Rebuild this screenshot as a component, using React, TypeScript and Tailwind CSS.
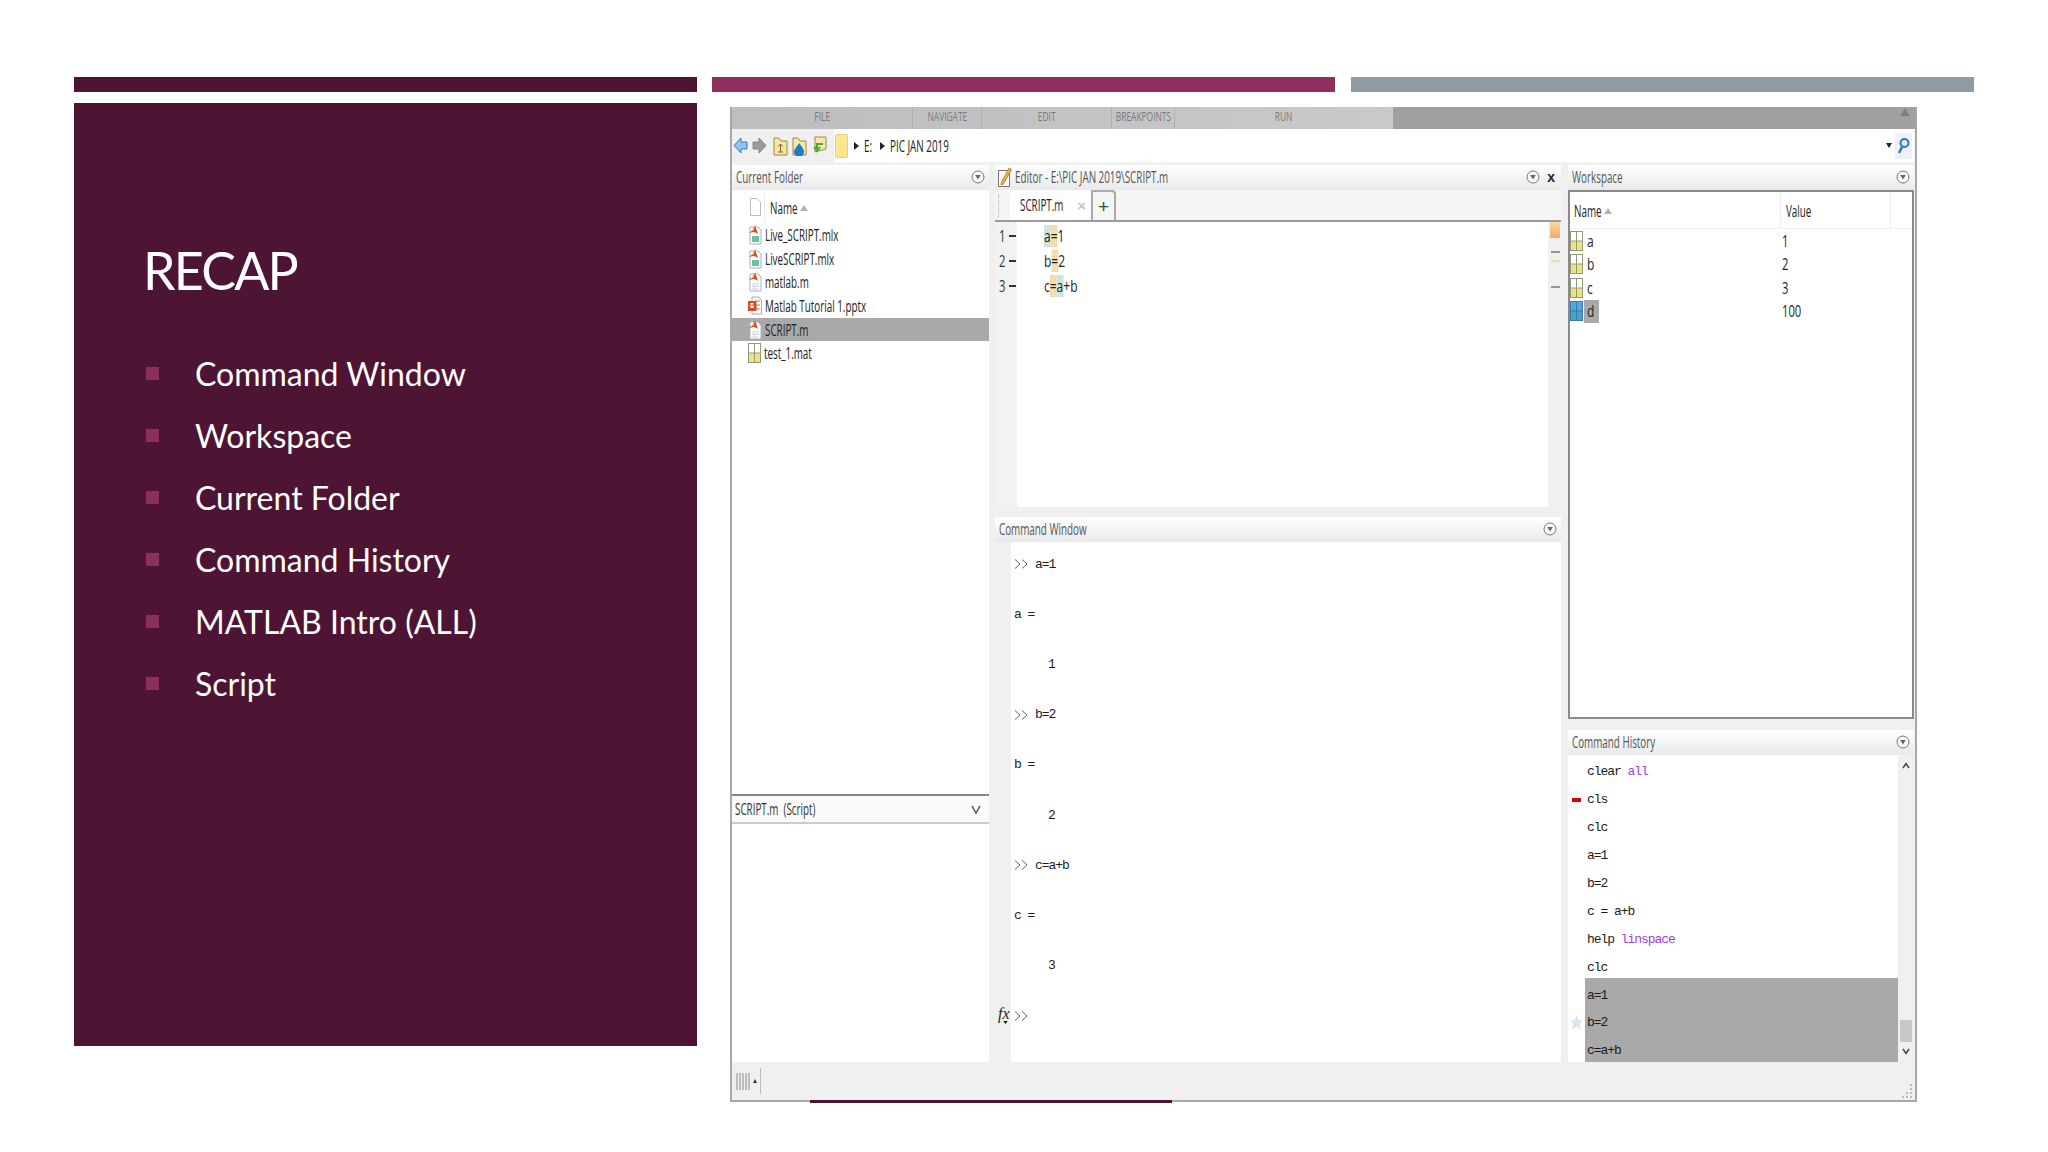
import React from "react";

const uiBase = "inline-block whitespace-nowrap font-['Open_Sans',sans-serif] leading-none";
const ui = `${uiBase} origin-left scale-x-[.615] text-[16px]`;
const code = `${uiBase} origin-left scale-x-[.75] text-[16px]`;
const digit = `${uiBase} origin-left scale-x-[.7] text-[16px]`;
const tabLabel = `${uiBase} origin-center scale-x-[.7] text-[12px] text-[#7a7a7a]`;
const mono = "font-['Liberation_Mono',monospace] text-[13px] tracking-[-1.05px] leading-none whitespace-pre text-[#1c1c1c]";

const bullets = ["Command Window", "Workspace", "Current Folder", "Command History", "MATLAB Intro (ALL)", "Script"];

function MenuIcon() {
  return (
    <svg width="14" height="18" viewBox="0 0 14 18" className="shrink-0">
      <circle cx="7" cy="9" r="6" fill="#fafafa" stroke="#777" strokeWidth="1" />
      <path d="M4.2 7 H9.8 L7 11.5 Z" fill="#666" />
    </svg>
  );
}

function PanelHeader({ title, icon, close }: { title: string; icon?: React.ReactNode; close?: boolean }) {
  return (
    <div className="flex h-[25px] shrink-0 items-center bg-linear-to-b from-white to-[#e9e9e9] pb-[2px] pl-[4px] pr-[4px]">
      {icon}
      <span className={`${ui} min-w-0 flex-1 text-[#555]`}>{title}</span>
      <MenuIcon />
      {close && <span className="ml-[7px] mr-[2px] font-['Liberation_Sans',sans-serif] text-[14px] font-bold leading-none text-[#222]">x</span>}
    </div>
  );
}

function SortArrow() {
  return (
    <svg width="8" height="6" viewBox="0 0 8 6" className="shrink-0">
      <path d="M0 6 L4 0 L8 6 Z" fill="#b4b4a8" />
    </svg>
  );
}

function MatlabFile({ kind }: { kind: "live" | "m" | "ppt" }) {
  if (kind === "ppt") {
    return (
      <svg width="14" height="20" viewBox="0 0 14 20" className="shrink-0">
        <path d="M4 1 H11 L13.500 4 V18 H4 Z" fill="#fff" stroke="#aaa" />
        <path d="M7 5 h5 M7 9 h5 M7 13 h5" stroke="#e8a088" strokeWidth="1.500" />
        <rect x="0" y="5" width="8.500" height="10" fill="#d84a26" />
        <rect x="2.500" y="7" width="3" height="5" fill="#fff" />
        <rect x="3.500" y="8" width="1.200" height="1.800" fill="#d84a26" />
      </svg>
    );
  }
  return (
    <svg width="14" height="20" viewBox="0 0 14 20" className="shrink-0">
      <path d="M2 2 H10 L13 5 V19 H2 Z" fill="#fff" stroke="#a8b0c0" />
      {kind === "live" ? (
        <rect x="4" y="11" width="7" height="6" fill="#6cc0a8" />
      ) : (
        <path d="M4 12 h7 M4 14.500 h7 M4 17 h7" stroke="#c5cfe0" />
      )}
      <path d="M0.500 8 L4.500 5.500 L7 0.500 L10 9 L7.500 7.500 L5 7 Z" fill="#d9481f" />
      <path d="M4.500 5.500 L7 0.500 L5.500 7 Z" fill="#f3a23a" />
    </svg>
  );
}

function GridIcon({ blue }: { blue?: boolean }) {
  const top = blue ? "#5aa6dc" : "#fff";
  const bottom = blue ? "#4ea0c8" : "#f2e27c";
  const line = blue ? "#2f7fa8" : "#8f9a7c";
  return (
    <svg width="13" height="20" viewBox="0 0 13 20" className="shrink-0">
      <rect x="0.500" y="0.500" width="12" height="19" fill={top} stroke={line} />
      <rect x="1" y="10" width="11" height="9" fill={bottom} />
      <path d="M6.500 0 V20 M0 10 H13" stroke={line} />
    </svg>
  );
}

function FileRow({ name, kind, selected }: { name: string; kind: "live" | "m" | "ppt" | "mat"; selected?: boolean }) {
  return (
    <div className={`flex h-[23.7px] items-center pl-[16px] ${selected ? "bg-[#a9a9a9]" : ""}`}>
      {kind === "mat" ? <GridIcon /> : <MatlabFile kind={kind} />}
      <span className={`${ui} ml-[3px] text-[#222]`}>{name}</span>
    </div>
  );
}

function CodeChar({ c, bg }: { c: string; bg?: string }) {
  return <span style={bg ? { background: bg } : undefined}>{c}</span>;
}

function EditorLine({ n, chars }: { n: number; chars: [string, string?][] }) {
  return (
    <div className="flex h-[25px] items-center">
      <div className="flex h-full w-[22px] shrink-0 items-center justify-between bg-[#f2f2f2] pl-[4px] pr-[1px] text-[#333]">
        <span className={digit}>{n}</span>
        <span className="h-[2px] w-[7px] bg-[#333]" />
      </div>
      <span className={`${code} ml-[27px] text-[#222]`}>
        {chars.map(([c, bg], i) => (
          <CodeChar key={i} c={c} bg={bg} />
        ))}
      </span>
    </div>
  );
}

const teal = "#cfe4df";
const sand = "#f4dcae";

const commandLines: { text: string; prompt?: boolean; indent?: boolean }[] = [
  { text: "a=1", prompt: true },
  { text: "a =" },
  { text: "1", indent: true },
  { text: "b=2", prompt: true },
  { text: "b =" },
  { text: "2", indent: true },
  { text: "c=a+b", prompt: true },
  { text: "c =" },
  { text: "3", indent: true },
];

function Prompt() {
  return (
    <svg width="15" height="12" viewBox="0 0 15 12" className="mr-[6px] shrink-0">
      <path d="M1 1.500 L6 6 L1 10.500 M8 1.500 L13 6 L8 10.500" fill="none" stroke="#666" strokeWidth="1" />
    </svg>
  );
}

const history: { cmd: string; arg?: string; selected?: boolean; mark?: "red" | "star" }[] = [
  { cmd: "clear ", arg: "all" },
  { cmd: "cls", mark: "red" },
  { cmd: "clc" },
  { cmd: "a=1" },
  { cmd: "b=2" },
  { cmd: "c = a+b" },
  { cmd: "help ", arg: "linspace" },
  { cmd: "clc" },
  { cmd: "a=1", selected: true },
  { cmd: "b=2", selected: true, mark: "star" },
  { cmd: "c=a+b", selected: true },
];

function HistoryRow({ cmd, arg, selected, mark }: (typeof history)[number]) {
  return (
    <div className="flex h-[27.9px] items-center">
      <div className="flex w-[17px] shrink-0 items-center justify-center">
        {mark === "red" && <span className="h-[4px] w-[9px] bg-[#e00000]" />}
        {mark === "star" && (
          <svg width="13" height="15" viewBox="0 0 13 15">
            <path d="M6.500 0 L8.500 5.500 L13 5.500 L9.500 9 L11 15 L6.500 11.500 L2 15 L3.500 9 L0 5.500 L4.500 5.500 Z" fill="#d9e5ee" />
          </svg>
        )}
      </div>
      <div className={`flex h-full flex-1 items-center pl-[2px] ${selected ? "bg-[#a9a9a9] shadow-[0_-3px_0_#a9a9a9]" : ""}`}>
        <span className={`${mono} relative`}>
          {cmd}
          {arg && <span className="text-[#a040e8]">{arg}</span>}
        </span>
      </div>
    </div>
  );
}

function ToolTab({ label, width, last }: { label: string; width: string; last?: boolean }) {
  return (
    <div className={`flex h-full items-center justify-center pb-[3px] ${width} ${last ? "" : "border-r border-[#b0b0b0]"}`}>
      <span className={tabLabel}>{label}</span>
    </div>
  );
}

function Toolbar() {
  return (
    <div className="flex h-[33px] shrink-0 items-center pl-[1px] pr-[1px]">
      <svg width="15" height="19" viewBox="0 0 15 19" className="shrink-0">
        <path d="M1 9.500 L8 2 V6 H14 V13 H8 V17 Z" fill="#8cc4ee" stroke="#3a78b8" strokeWidth="1" />
      </svg>
      <svg width="15" height="19" viewBox="0 0 15 19" className="ml-[4px] shrink-0">
        <path d="M14 9.500 L7 2 V6 H1 V13 H7 V17 Z" fill="#9b9b9b" stroke="#8a8a8a" strokeWidth="1" />
      </svg>
      <svg width="15" height="20" viewBox="0 0 15 20" className="ml-[6px] shrink-0">
        <path d="M1 2 H6 L8 5 H14 V19 H1 Z" fill="#f8e6a8" stroke="#a08840" />
        <path d="M7.500 8 V16 M5 10.500 L7.500 8 L10 10.500 M5 16 H10" fill="none" stroke="#7a6a30" />
      </svg>
      <svg width="15" height="20" viewBox="0 0 15 20" className="ml-[4px] shrink-0">
        <path d="M1 2 H6 L8 5 H14 V19 H1 Z" fill="#f8e6a8" stroke="#a08840" />
        <path d="M7 7 C10 11 12 13 12 16 A4.500 4 0 0 1 2 16 C2 13 5 11 7 7 Z" fill="#1f78c8" />
      </svg>
      <svg width="15" height="20" viewBox="0 0 15 20" className="ml-[5px] shrink-0">
        <path d="M3 1 H9 L14 1 V13 L3 16 Z" fill="#f8e6a8" stroke="#a08840" />
        <path d="M11 8 H5 L5 13 M2 11 L5 15 L8 11" fill="none" stroke="#4aa83c" strokeWidth="2" />
      </svg>
      <div className="ml-[7px] flex h-full flex-1 items-center bg-white pl-[1px] pr-[2px]">
        <svg width="13" height="24" viewBox="0 0 13 24" className="shrink-0">
          <rect x="0.500" y="0.500" width="12" height="23" rx="1" fill="#fbe68c" stroke="#e8cf80" />
        </svg>
        <svg width="5" height="8" viewBox="0 0 5 8" className="ml-[6px] shrink-0">
          <path d="M0 0 L5 4 L0 8 Z" fill="#222" />
        </svg>
        <span className={`${ui} ml-[5px] w-[15px] text-[#222]`}>E:</span>
        <svg width="5" height="8" viewBox="0 0 5 8" className="ml-[1px] shrink-0">
          <path d="M0 0 L5 4 L0 8 Z" fill="#222" />
        </svg>
        <span className={`${ui} ml-[5px] min-w-0 flex-1 text-[#222]`}>PIC JAN 2019</span>
        <svg width="6" height="5" viewBox="0 0 6 5" className="shrink-0">
          <path d="M0 0 H6 L3 5 Z" fill="#222" />
        </svg>
        <div className="ml-[3px] flex h-[26px] w-[17px] items-center justify-center bg-[#eef1f6]">
          <svg width="13" height="18" viewBox="0 0 13 18">
            <circle cx="7.500" cy="6" r="4" fill="#dcecf8" stroke="#2c78c0" strokeWidth="2" />
            <path d="M5 10 L2 16" stroke="#2c78c0" strokeWidth="2.500" />
          </svg>
        </div>
      </div>
    </div>
  );
}

function CurrentFolder() {
  return (
    <div className="flex w-[257px] shrink-0 flex-col bg-white">
      <PanelHeader title="Current Folder" />
      <div className="flex h-[33px] shrink-0 items-center pl-[18px]">
        <svg width="11" height="18" viewBox="0 0 11 18" className="shrink-0">
          <path d="M0.500 0.500 H7 L10.500 4 V17.500 H0.500 Z" fill="#fff" stroke="#bbb" />
        </svg>
        <div className="ml-[3px] flex h-full items-center border-l border-[#eee] pl-[5px] pt-[2px]">
          <span className={`${ui} w-[30px] text-[#222]`}>Name</span>
          <SortArrow />
        </div>
      </div>
      <div className="h-[571px] shrink-0">
        <FileRow name="Live_SCRIPT.mlx" kind="live" />
        <FileRow name="LiveSCRIPT.mlx" kind="live" />
        <FileRow name="matlab.m" kind="m" />
        <FileRow name="Matlab Tutorial 1.pptx" kind="ppt" />
        <FileRow name="SCRIPT.m" kind="m" selected />
        <FileRow name="test_1.mat" kind="mat" />
      </div>
      <div className="flex h-[30px] shrink-0 items-center justify-between border-y-2 border-t-[#888] border-b-[#ccc] bg-[#fafafa] pl-[3px] pr-[8px]">
        <span className={`${ui} w-[90px] text-[#333]`}>SCRIPT.m&nbsp; (Script)</span>
        <svg width="10" height="9" viewBox="0 0 10 9" className="shrink-0">
          <path d="M1 1 L5 8 L9 1" fill="none" stroke="#555" strokeWidth="1.500" />
        </svg>
      </div>
      <div className="flex-1" />
    </div>
  );
}

function EditorTabs() {
  return (
    <div className="flex h-[32px] shrink-0 items-end border-b-2 border-[#9a9a9a] bg-[#f5f5f5] pl-[3px]">
      <div className="mb-[3px] h-[22px] w-[2px] border-l border-dotted border-[#aaa]" />
      <div className="ml-[10px] flex h-[30px] w-[81px] items-center justify-between rounded-t-[4px] bg-white pl-[10px] pr-[5px]">
        <span className={`${ui} w-[46px] text-[#222]`}>SCRIPT.m</span>
        <span className="font-['Liberation_Sans',sans-serif] text-[15px] font-bold leading-none text-[#c4c4c4]">×</span>
      </div>
      <div className="flex h-[30px] w-[25px] items-center justify-center rounded-tr-[4px] border-x-2 border-t-2 border-[#aaa] bg-[#f5f5f5] font-['Liberation_Sans',sans-serif] text-[19px] leading-none text-[#444]">
        +
      </div>
    </div>
  );
}

function EditorPanel() {
  return (
    <div className="flex h-[342px] shrink-0 flex-col bg-white">
      <PanelHeader
        title="Editor - E:\PIC JAN 2019\SCRIPT.m"
        icon={
          <svg width="14" height="20" viewBox="0 0 14 20" className="mr-[3px] shrink-0 -ml-[1px]">
            <rect x="0.500" y="3.500" width="11" height="16" fill="#fff" stroke="#777" />
            <path d="M3 16 L11 1 L13.500 2.500 L5.500 17 L3 18 Z" fill="#f0b040" stroke="#a06820" strokeWidth="0.700" />
          </svg>
        }
        close
      />
      <EditorTabs />
      <div className="flex min-h-0 flex-1">
        <div className="flex flex-1 flex-col bg-white">
          <div className="flex-1 bg-linear-to-r from-[#f2f2f2] from-[22px] to-white to-[22px]">
            <div className="pt-[1px]">
              <EditorLine n={1} chars={[["a", teal], ["=", sand], ["1"]]} />
              <EditorLine n={2} chars={[["b"], ["=", sand], ["2"]]} />
              <EditorLine n={3} chars={[["c"], ["=", sand], ["a", teal], ["+"], ["b"]]} />
            </div>
          </div>
        </div>
        <div className="flex w-[13px] shrink-0 flex-col items-end bg-[#f0f0f0] pr-[1px]">
          <div className="h-[16px] w-[10px] bg-linear-to-b from-[#fbd9a8] to-[#f3a860]" />
          <div className="mt-[13px] h-[2px] w-[9px] bg-[#8a9a94]" />
          <div className="mt-[7px] h-[2px] w-[9px] bg-[#f4d8a8]" />
          <div className="mt-[24px] h-[2px] w-[9px] bg-[#8a9a94]" />
        </div>
      </div>
    </div>
  );
}

function CommandWindow() {
  return (
    <div className="mt-[10px] flex min-h-0 flex-1 flex-col bg-white">
      <PanelHeader title="Command Window" />
      <div className="flex min-h-0 flex-1 bg-white">
        <div className="relative w-[16px] shrink-0 bg-[#f0f0f0]">
          <span className="absolute left-[3px] top-[464px] font-['Liberation_Serif',serif] text-[16px] italic leading-none text-[#222]">fx</span>
          <svg width="5" height="3" viewBox="0 0 6 4" className="absolute left-[8px] top-[479px]">
            <path d="M0 0 H6 L3 4 Z" fill="#222" />
          </svg>
        </div>
        <div className="-mt-[3px] flex-1 pl-[3px]">
          {commandLines.map((l, i) => (
            <div key={i} className="flex h-[50.2px] items-center">
              {l.prompt && <Prompt />}
              <span className={`${mono} ${l.indent ? "pl-[34px]" : ""}`}>{l.text}</span>
            </div>
          ))}
          <div className="flex h-[50.2px] items-center">
            <Prompt />
          </div>
        </div>
      </div>
    </div>
  );
}

function WorkspaceRow({ name, value, blue }: { name: string; value: string; blue?: boolean }) {
  return (
    <div className="flex h-[23.500px] items-center">
      <div className="flex w-[212px] items-center">
        <GridIcon blue={blue} />
        <div className={`ml-[1px] flex h-[23px] w-[15px] items-center pl-[3px] ${blue ? "bg-[#a9a9a9]" : ""}`}>
          <span className={`${code} text-[#222]`}>{name}</span>
        </div>
      </div>
      <span className={`${digit} text-[#222]`}>{value}</span>
    </div>
  );
}

function Workspace() {
  return (
    <div className="flex h-[554px] shrink-0 flex-col">
      <PanelHeader title="Workspace" />
      <div className="flex-1 border-2 border-[#8a8a8a] bg-white">
        <div className="flex h-[37px] items-center border-b border-[#f2f2f2]">
          <div className="flex h-full w-[211px] items-center border-r border-[#eee] pl-[4px] pt-[2px]">
            <span className={`${ui} w-[30px] text-[#222]`}>Name</span>
            <SortArrow />
          </div>
          <div className="flex h-full w-[110px] items-center border-r border-[#eee] pl-[5px] pt-[2px]">
            <span className={`${ui} text-[#222]`}>Value</span>
          </div>
        </div>
        <WorkspaceRow name="a" value="1" />
        <WorkspaceRow name="b" value="2" />
        <WorkspaceRow name="c" value="3" />
        <WorkspaceRow name="d" value="100" blue />
      </div>
    </div>
  );
}

function CommandHistory() {
  return (
    <div className="mt-[11px] flex min-h-0 flex-1 flex-col">
      <PanelHeader title="Command History" />
      <div className="flex min-h-0 flex-1 bg-white">
        <div className="flex-1 overflow-hidden pt-[3px]">
          {history.map((h, i) => (
            <HistoryRow key={i} {...h} />
          ))}
        </div>
        <div className="flex w-[16px] shrink-0 flex-col items-center justify-between bg-[#f0f0f0] py-[7px]">
          <svg width="8" height="7" viewBox="0 0 8 7">
            <path d="M1 6 L4 1.500 L7 6" fill="none" stroke="#444" strokeWidth="1.500" />
          </svg>
          <div className="mt-auto mb-[6px] h-[22px] w-[12px] bg-[#c8c8c8]" />
          <svg width="8" height="7" viewBox="0 0 8 7">
            <path d="M1 1 L4 5.500 L7 1" fill="none" stroke="#444" strokeWidth="1.500" />
          </svg>
        </div>
      </div>
    </div>
  );
}

function MatlabWindow() {
  return (
    <div className="relative ml-[33px] mt-[4px] flex h-[995px] w-[1187px] flex-col border-x-2 border-b-2 border-[#a8a8a8] bg-[#f0f0f0]">
      <div className="flex h-[22px] shrink-0 items-stretch bg-[#a0a0a0]">
        <div className="flex w-[661px] bg-linear-to-r from-[#bdbdbd] to-[#c9c9c9]">
          <ToolTab label="FILE" width="w-[181px]" />
          <ToolTab label="NAVIGATE" width="w-[69px]" />
          <ToolTab label="EDIT" width="w-[130px]" />
          <ToolTab label="BREAKPOINTS" width="w-[63px]" />
          <ToolTab label="RUN" width="w-[218px]" last />
        </div>
        <div className="flex flex-1 justify-end pr-[5px] pt-[1px]">
          <svg width="10" height="8" viewBox="0 0 10 8">
            <path d="M0 8 L5 0 L10 8 Z" fill="#7d7d7d" />
          </svg>
        </div>
      </div>
      <Toolbar />
      <div className="flex min-h-0 flex-1 pt-[3px]">
        <CurrentFolder />
        <div className="ml-[6px] flex w-[566px] shrink-0 flex-col">
          <EditorPanel />
          <CommandWindow />
        </div>
        <div className="ml-[7px] flex w-[346px] shrink-0 flex-col">
          <Workspace />
          <CommandHistory />
        </div>
      </div>
      <div className="flex h-[38px] shrink-0 items-center justify-between pl-[4px] pr-[3px]">
        <div className="flex items-center">
          <svg width="14" height="19" viewBox="0 0 14 19" className="shrink-0">
            <path d="M1 1 V18 M4 1 V18 M7 1 V18 M10 1 V18 M13 1 V18" stroke="#aaa" strokeWidth="1.500" />
          </svg>
          <svg width="4" height="4" viewBox="0 0 4 4" className="ml-[3px] shrink-0">
            <path d="M0 4 L2 0 L4 4 Z" fill="#333" />
          </svg>
          <div className="ml-[3px] h-[26px] w-px bg-[#bbb]" />
        </div>
        <svg width="10" height="14" viewBox="0 0 10 14" className="mt-[20px] shrink-0">
          <path d="M8 1 h2 M8 5 h2 M8 9 h2 M8 13 h2 M4 9 h2 M4 13 h2 M0 13 h2" stroke="#bbb" strokeWidth="2" />
        </svg>
      </div>
      {/* edge of the slide panel showing under the pasted picture */}
      <div className="absolute bottom-[-3px] left-[78px] h-[3px] w-[362px] bg-[#4d1533]" />
    </div>
  );
}

export default function App() {
  return (
    <div className="h-[1152px] w-[2048px] overflow-hidden bg-white pl-[74px] pt-[77px]">
      <div className="flex h-[15px] gap-[15px]">
        <div className="w-[623px] bg-[#4d1533]" />
        <div className="w-[623px] bg-[#8f2f60]" />
        <div className="ml-px w-[623px] bg-[#919ba6]" />
      </div>
      <div className="mt-[11px] flex items-start">
        <div className="h-[943px] w-[623px] shrink-0 bg-[#4d1533] pl-[69px] pt-[137px] font-['Lato',sans-serif] text-white">
          <h1 className="text-[52px] font-normal leading-[60px] tracking-[-1.8px]">RECAP</h1>
          <ul className="mt-[43px]">
            {bullets.map((b) => (
              <li key={b} className="flex h-[62px] items-center text-[32px] leading-none">
                <span className="mb-[1px] ml-[3px] mr-[36px] h-[13px] w-[13px] shrink-0 bg-[#8b2f5e]" />
                {b}
              </li>
            ))}
          </ul>
        </div>
        <MatlabWindow />
      </div>
    </div>
  );
}
